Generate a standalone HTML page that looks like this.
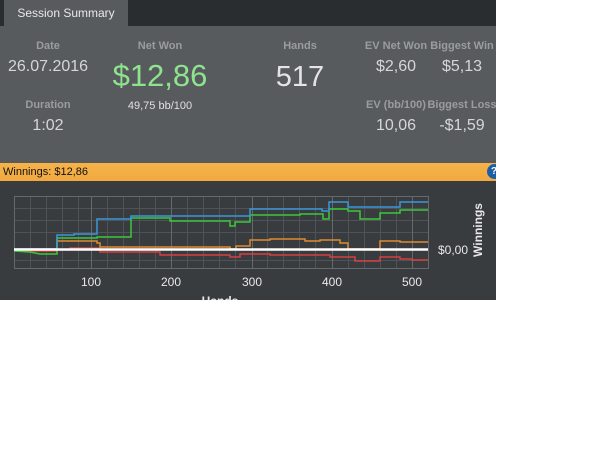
<!DOCTYPE html><html><head><style>
body{margin:0;width:614px;height:460px;background:#fff;position:relative;overflow:hidden;font-family:"Liberation Sans",sans-serif}
.a{position:absolute}
.l{position:absolute;color:#9a9c9e;font-weight:bold;font-size:11px;text-align:center;width:90px;margin-left:-45px}
.v{position:absolute;color:#d6d6d6;font-size:16px;text-align:center;width:110px;margin-left:-55px}
</style></head><body>
<div class="a" style="left:0;top:0;width:496px;height:26px;background:#2a2d30"></div>
<div class="a" style="left:4px;top:0;width:124px;height:26px;background:#585b5e;color:#e8e8e8;font-size:12px;line-height:26px;text-align:center">Session Summary</div>
<div class="a" style="left:0;top:26px;width:496px;height:137px;background:#585b5e"></div>
<div class="l" style="left:48px;top:40px">Date</div>
<div class="v" style="left:48px;top:58px">26.07.2016</div>
<div class="l" style="left:48px;top:99px">Duration</div>
<div class="v" style="left:48px;top:117px">1:02</div>
<div class="l" style="left:160px;top:40px">Net Won</div>
<div class="a" style="left:100px;width:120px;text-align:center;top:58px;font-size:31px;color:#8fe38f">$12,86</div>
<div class="a" style="left:100px;width:120px;text-align:center;top:100px;font-size:11px;color:#e0e0e0">49,75 bb/100</div>
<div class="l" style="left:300px;top:40px">Hands</div>
<div class="a" style="left:250px;width:100px;text-align:center;top:61px;font-size:29px;color:#e4e4e4">517</div>
<div class="l" style="left:396px;top:40px">EV Net Won</div>
<div class="v" style="left:396px;top:58px">$2,60</div>
<div class="l" style="left:462px;top:40px">Biggest Win</div>
<div class="v" style="left:462px;top:58px">$5,13</div>
<div class="l" style="left:396px;top:99px">EV (bb/100)</div>
<div class="v" style="left:396px;top:117px">10,06</div>
<div class="l" style="left:462px;top:99px">Biggest Loss</div>
<div class="v" style="left:462px;top:117px">-$1,59</div>
<div class="a" style="left:0;top:163px;width:496px;height:18px;background:linear-gradient(#f6b34a,#f0a940);font-size:11px;line-height:18px;color:#111;padding-left:3px;box-sizing:border-box">Winnings: $12,86</div>
<div class="a" style="left:487px;top:164px;width:9px;height:15px;overflow:hidden"><div style="width:15px;height:15px;border-radius:50%;background:#1d5fa6;color:#fff;font-size:10px;font-weight:bold;text-indent:4px;line-height:15px">?</div></div>
<div class="a" style="left:0;top:181px;width:496px;height:119px;background:#393c3f"></div>
<svg class="a" style="left:0;top:0" width="496" height="300">
<g stroke="#4f5256" stroke-width="1">
<line x1="14" y1="208.5" x2="428" y2="208.5"/><line x1="14" y1="220.5" x2="428" y2="220.5"/><line x1="14" y1="232.5" x2="428" y2="232.5"/><line x1="14" y1="260.5" x2="428" y2="260.5"/>
<line x1="30.5" y1="196" x2="30.5" y2="268"/><line x1="46.5" y1="196" x2="46.5" y2="268"/><line x1="62.5" y1="196" x2="62.5" y2="268"/><line x1="78.5" y1="196" x2="78.5" y2="268"/>
<line x1="107.5" y1="196" x2="107.5" y2="268"/><line x1="123.5" y1="196" x2="123.5" y2="268"/><line x1="139.5" y1="196" x2="139.5" y2="268"/><line x1="155.5" y1="196" x2="155.5" y2="268"/>
<line x1="187.5" y1="196" x2="187.5" y2="268"/><line x1="203.5" y1="196" x2="203.5" y2="268"/><line x1="219.5" y1="196" x2="219.5" y2="268"/><line x1="235.5" y1="196" x2="235.5" y2="268"/>
<line x1="267.5" y1="196" x2="267.5" y2="268"/><line x1="283.5" y1="196" x2="283.5" y2="268"/><line x1="299.5" y1="196" x2="299.5" y2="268"/><line x1="315.5" y1="196" x2="315.5" y2="268"/>
<line x1="348.5" y1="196" x2="348.5" y2="268"/><line x1="364.5" y1="196" x2="364.5" y2="268"/><line x1="380.5" y1="196" x2="380.5" y2="268"/><line x1="396.5" y1="196" x2="396.5" y2="268"/>
</g>
<g stroke="#65686c"><line x1="91.5" y1="196" x2="91.5" y2="268"/><line x1="171.5" y1="196" x2="171.5" y2="268"/><line x1="252.5" y1="196" x2="252.5" y2="268"/><line x1="332.5" y1="196" x2="332.5" y2="268"/><line x1="412.5" y1="196" x2="412.5" y2="268"/></g>
<rect x="14.5" y="196.5" width="414" height="72" fill="none" stroke="#65686c"/>
<g fill="none" stroke-width="1.5">
<polyline stroke="#d64040" points="14,251 57,251 57,250 70,250 70,248 100,248 100,252 160,252 160,255 230,255 230,257 240,257 240,254 270,254 270,255 330,255 330,257 355,257 355,261 380,261 380,257 400,257 400,259 412,259 412,260 428,260"/>
<polyline stroke="#e08a30" points="14,249 57,249 57,241 97,241 97,243 100,243 100,247 230,247 230,249 236,249 236,246 250,246 250,240 270,240 270,239 305,239 305,241 320,241 320,240 340,240 340,243 348,243 348,249 380,249 380,241 400,241 400,242 428,242"/>
<polyline stroke="#3cc83c" points="14,251 30,252 40,254 57,254 57,238 97,238 97,237 131,237 131,218 170,218 170,221 230,221 230,226 235,226 235,222 250,222 250,215 300,215 300,214 323,214 323,219 329,219 329,209 348,209 348,211 360,211 360,219 380,219 380,213 400,213 400,210 428,210"/>
<polyline stroke="#3a96d8" points="14,249 57,249 57,235 74,235 74,234 97,234 97,219 131,219 131,216 250,216 250,209 322,209 322,211 329,211 329,202 348,202 348,207 400,207 400,202 428,202"/>
</g>
<line x1="14" y1="249.5" x2="428" y2="249.5" stroke="#fff" stroke-width="2.5"/>
<g fill="#e8e8e8" font-size="12" font-family="Liberation Sans,sans-serif" text-anchor="middle">
<text x="91" y="286">100</text><text x="171" y="286">200</text><text x="252" y="286">300</text><text x="332" y="286">400</text><text x="412" y="286">500</text>
<text x="453" y="254">$0,00</text>
<text x="220" y="305" font-weight="bold">Hands</text>
<text transform="translate(482,230) rotate(-90)" font-weight="bold">Winnings</text>
</g>
</svg>
</body></html>
